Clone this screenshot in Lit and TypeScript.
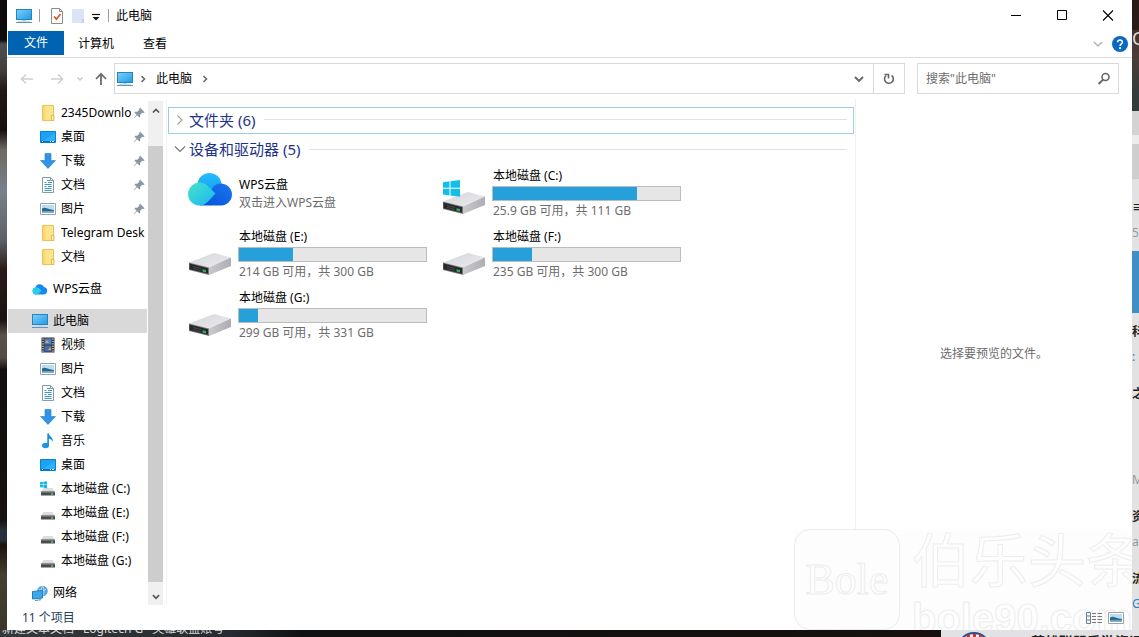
import { LitElement, html, css, svg, nothing, TemplateResult } from "lit";
import { customElement, property } from "lit/decorators.js";

const monitor = svg`
  <defs><linearGradient id="scr" x1="0" y1="0" x2="1" y2="1"><stop offset="0" stop-color="#7fd0fb"/><stop offset="1" stop-color="#1c9be8"/></linearGradient></defs>
  <rect x="0.5" y="1.5" width="15" height="10" fill="url(#scr)" stroke="#2b83b5"/>
  <path d="M6 12h4v1H6z" fill="#b9d3e2"/><path d="M0 14.5h16" stroke="#5b97bd"/><path d="M2 13.5h12" stroke="#c4dbe8"/>`;

const windowsFlag = svg`<path d="M0 1.2 2.9.8v2.6H0zM3.4.7 7 .2v3.2H3.4zM0 3.9h2.9v2.7L0 6.2zM3.4 3.9H7v3.3l-3.6-.5z" fill="#14b4e4"/>`;

const smallDrive = svg`
  <path d="M3.5 7h9L15 11H1z" fill="#dcdcdc"/><path d="M1 10.5h14v4H1z" fill="#4a4d4f"/>
  <path d="M1 10.5h14v1H1z" fill="#8b8e90"/><path d="M11 12.5h2v1h-2z" fill="#8fe39a"/>`;

const ICONS: Record<string, TemplateResult> = {
  pc: monitor,
  folder: svg`<path d="M2.500 .5h11v15h-11z" fill="#ffe48f" stroke="#e8c35a"/><path d="M11.500 10.500h2.500v5h-2.500z" fill="#fff0b5" stroke="#e3b94a"/><path d="M3 1h2.500v14H3z" fill="#ffd768"/>`,
  desktop: svg`<path d="M.5 2.500h15v11H.5z" fill="#1aa3f5" stroke="#0b7fd0"/><path d="M1 13 15 4v9z" fill="#2fb0fa"/><path d="M1 12h14v1.500H1z" fill="#0a72bd"/><path d="M2 12.500h1M10 12.500h1M12 12.500h2" stroke="#cfeaff"/>`,
  download: svg`<path d="M5 .5h6v7h4.500L8 15.500.5 7.500H5z" fill="#3193e3" stroke="#2380cd" stroke-width=".6"/>`,
  doc: svg`<path d="M2.500 .5h8l3 3v12h-11z" fill="#fff" stroke="#8a9aa5"/><path d="M10.500 .5v3h3" fill="none" stroke="#8a9aa5"/><path d="M7 3.500h3M4.500 5.500h2M8 5.500h4M4.500 7.500h7M4.500 9.500h2M8 9.500h4M4.500 11.500h7M4.500 13.500h7" stroke="#3b95bd"/>`,
  picture: svg`<path d="M.5 2.500h15v11H.5z" fill="#fff" stroke="#9aa3aa"/><path d="M2 4h12v8H2z" fill="#b9def2"/><path d="M2 7.500c3-2 6 1 12 1.500v3H2z" fill="#2e6c8d"/><path d="M2 10.500c4-1 8 .5 12-.5v2H2z" fill="#7bb5cf"/>`,
  cloud: svg`<path d="M4 13.500a3.600 3.600 0 0 1-.6-7.100A4.600 4.600 0 0 1 12 6a3.800 3.800 0 0 1 0 7.500z" fill="#1786f0"/><path d="M4 13.500a3.600 3.600 0 0 1-.6-7.100c3-.8 4.500 1.600 6 3.400-1.500 2-3 3.700-5.400 3.700z" fill="#28cfe0"/>`,
  video: svg`<path d="M1.500 .5h13v15h-13z" fill="#33363b"/><path d="M4.500 1.500h7v6h-7z" fill="#4d7fc4"/><path d="M4.500 8.500h7v6h-7z" fill="#3f6cb4"/><path d="M5 6l2-3 2 3zM8 13l2-3 1.500 3z" fill="#e2a34a"/><path d="M3 1.500v14M13 1.500v14" stroke="#e5e5e5" stroke-width="1.200" stroke-dasharray="1.200 1.200"/>`,
  music: svg`<ellipse cx="5.500" cy="12.500" rx="3.500" ry="2.700" fill="#1b95e0"/><path d="M7.300 12.500V.5h1.600c.2 3 4.600 3.600 3.800 8.500-.7-2-2-3-3.800-3.300v7z" fill="#1b8ad6"/>`,
  winDrive: svg`${smallDrive}${windowsFlag}`,
  drive: smallDrive,
  network: svg`<circle cx="10.500" cy="6" r="5.300" fill="#5ba6de"/><path d="M7 4c2 2 5 2 7 0M10.500 1c-2 3-2 7 0 10M10.500 1c2 3 2 7 0 10" fill="none" stroke="#d5ebfa" stroke-width=".7"/><path d="M.5 6.500 10.500 5.500v7.500l-10 1z" fill="#3aa9ea" stroke="#2a7db5"/><path d="M3 15.500l6-.8" stroke="#4d8db5"/>`,
  check: svg`<path d="M2.500 .5h8l3 3v12h-11z" fill="#fff" stroke="#8c8c8c"/><path d="M10.500 .5v3h3" fill="none" stroke="#8c8c8c"/><path d="M5 8.500l2.400 2.700L11.500 6" fill="none" stroke="#e0562e" stroke-width="1.800"/>`,
  blank: svg`<path d="M2 1h12v14H2z" fill="#dbe4f6"/><path d="M12 11h2v4h-2z" fill="#c5d1ea"/>`,
  more: svg`<path d="M4 6.500h8" stroke="#111" stroke-width="1.200"/><path d="M4.500 9h7L8 12.500z" fill="#111"/>`,
  back: svg`<path d="M14 8H3M7 3.500 2.500 8 7 12.500" fill="none" stroke="#cfcfcf" stroke-width="1.500"/>`,
  forward: svg`<path d="M2 8h11M9 3.500 13.500 8 9 12.500" fill="none" stroke="#cfcfcf" stroke-width="1.500"/>`,
  recent: svg`<path d="M5.500 6.500 8 9l2.500-2.500" fill="none" stroke="#c4c4c4" stroke-width="1.300"/>`,
  up: svg`<path d="M8 14V3M3 8l5-5.300L13 8" fill="none" stroke="#6d6d6d" stroke-width="1.800"/>`,
  crumb: svg`<path d="M6.500 5 9.500 8l-3 3" fill="none" stroke="#6a6a6a" stroke-width="1.600"/>`,
  down: svg`<path d="M4 6l4 4 4-4" fill="none" stroke="#666" stroke-width="1.900"/>`,
  collapse: svg`<path d="M4 6l4 4 4-4" fill="none" stroke="#b2b2b2" stroke-width="1.500"/>`,
  refresh: svg`<path d="M5 4.600a4.400 4.400 0 1 0 5.600-.2" fill="none" stroke="#666" stroke-width="1.600"/><path d="M3.500 3.500h4v4" fill="none" stroke="#666" stroke-width="1.600"/>`,
  search: svg`<circle cx="9.500" cy="6" r="3.500" fill="none" stroke="#666" stroke-width="1.600"/><path d="M7 8.800 2.500 13" stroke="#666" stroke-width="1.900"/>`,
  help: svg`<circle cx="8" cy="8" r="8" fill="#0b67c2"/><path d="M5.700 6.300c0-3 4.800-3 4.700 0C10.300 8 8.100 8 8.100 10" fill="none" stroke="#fff" stroke-width="1.600"/><circle cx="8.100" cy="12.200" r="1.100" fill="#fff"/>`,
  min: svg`<path d="M3 7.500h10" stroke="#000"/>`,
  max: svg`<path d="M3.500 2.500h9v9h-9z" fill="none" stroke="#000"/>`,
  close: svg`<path d="M3 2.500l10 10M13 2.500l-10 10" stroke="#000" stroke-width="1.100"/>`,
  pin: svg`<path d="M9.500 1 15.500 7l-1.600.9-1.700-.2-2.600 2.600.1 2.700-1.200 1-3-3L1.500 15 1 14.500 4.800 10.300 1.900 7.400l1-1.100 2.800.1L8.300 3.800 8.200 2.200z" fill="#8997a3"/>`,
  scrollUp: svg`<path d="M4.500 9.700 8 6.200l3.500 3.500" fill="none" stroke="#555" stroke-width="1.900"/>`,
  scrollDown: svg`<path d="M4.500 8.200 8 11.700l3.500-3.500" fill="none" stroke="#555" stroke-width="1.900"/>`,
  folded: svg`<path d="M5.500 3.500 10 8l-4.500 4.500" fill="none" stroke="#a0a0a0" stroke-width="1.100"/>`,
  unfolded: svg`<path d="M3 5.500 8 10.500l5-5" fill="none" stroke="#777" stroke-width="1.200"/>`,
  details: svg`<path d="M.5 2.500h4v11h-4zM.5 6h4M.5 10h4" fill="none" stroke="#6b7f8d"/><path d="M6 3.500h4M11.500 3.500H16M6 6.500h4M11.500 6.500H16M6 9.500h4M11.500 9.500H16M6 12.500h4M11.500 12.500H16" stroke="#777"/>`,
};

@customElement("x-icon")
class XIcon extends LitElement {
  @property() name = "";
  static styles = css`
    :host { display: block; width: 16px; height: 16px; flex: none; }
    .icon { display: block; width: 100%; height: 100%; overflow: visible; }
  `;
  render() {
    return html`<svg class="icon" viewBox="0 0 16 16" aria-hidden="true">${ICONS[this.name]}</svg>`;
  }
}

const bigDrive = svg`
  <defs>
    <linearGradient id="top" x1="0" y1="0" x2="1" y2="1"><stop offset="0" stop-color="#d6d6da"/><stop offset="1" stop-color="#ececf0"/></linearGradient>
    <linearGradient id="side" x1="0" y1="0" x2="1" y2="0"><stop offset="0" stop-color="#c8c8cd"/><stop offset="1" stop-color="#adadb3"/></linearGradient>
  </defs>
  <path d="M1 29.500 26 20l17 4.500-22 10z" fill="url(#top)"/>
  <path d="M21 34.500 43 24.500v8.500L21 42z" fill="url(#side)"/>
  <path d="M1 29.500l20 5V42L1 37z" fill="#77787c"/>
  <path d="M1.500 30.500l18.500 4.700v5.600L1.500 36.200z" fill="#26282b"/>
  <path d="M5 33.500l8 2M5 35.500l8 2" stroke="#4c5054" stroke-width=".8"/>
  <path d="M14.500 36.200l3.500.9v2.300l-3.500-.9z" fill="#2fb350"/>`;

const bigFlag = svg`<path transform="translate(0 6)" d="M1 4.300 7.500 3.300v6.500H1zM8.500 3.200 18 2v7.800H8.500zM1 10.800h6.500v6.600L1 16.400zM8.500 10.800H18v8l-9.500-1.200z" fill="#12bfe8"/>`;

const bigCloud = svg`
  <defs>
    <linearGradient id="c1" x1="0" y1="0" x2="0" y2="1"><stop offset="0" stop-color="#22bdf8"/><stop offset="1" stop-color="#1597f5"/></linearGradient>
    <linearGradient id="c2" x1="0" y1="0" x2="1" y2="1"><stop offset="0" stop-color="#45e3cb"/><stop offset="1" stop-color="#1cb6f2"/></linearGradient>
    <linearGradient id="c3" x1="0" y1="1" x2="1" y2="0"><stop offset="0" stop-color="#0550d8"/><stop offset="1" stop-color="#1b78f0"/></linearGradient>
  </defs>
  <circle cx="21.500" cy="13" r="12" fill="url(#c1)"/>
  <path d="M12 33.500 26 14a11 11 0 1 1 7 19.500z" fill="url(#c3)"/>
  <path d="M11.500 33.500A11.500 11.500 0 1 1 19.600 13.800L27.500 21.500 19.600 30C17 32.500 15 33.500 11.500 33.500z" fill="url(#c2)"/>`;

interface NavItem { icon: string; label: string; pinned?: boolean; root?: boolean; current?: boolean; }

const NAV: NavItem[][] = [
  [
    { icon: "folder", label: "2345Downlo", pinned: true },
    { icon: "desktop", label: "桌面", pinned: true },
    { icon: "download", label: "下载", pinned: true },
    { icon: "doc", label: "文档", pinned: true },
    { icon: "picture", label: "图片", pinned: true },
    { icon: "folder", label: "Telegram Desk" },
    { icon: "folder", label: "文档" },
  ],
  [{ icon: "cloud", label: "WPS云盘", root: true }],
  [
    { icon: "pc", label: "此电脑", root: true, current: true },
    { icon: "video", label: "视频" },
    { icon: "picture", label: "图片" },
    { icon: "doc", label: "文档" },
    { icon: "download", label: "下载" },
    { icon: "music", label: "音乐" },
    { icon: "desktop", label: "桌面" },
    { icon: "winDrive", label: "本地磁盘 (C:)" },
    { icon: "drive", label: "本地磁盘 (E:)" },
    { icon: "drive", label: "本地磁盘 (F:)" },
    { icon: "drive", label: "本地磁盘 (G:)" },
  ],
  [{ icon: "network", label: "网络", root: true }],
];

interface Drive { name: string; note: string; used?: number; kind: "cloud" | "system" | "disk"; }

const DRIVES: Drive[] = [
  { name: "WPS云盘", note: "双击进入WPS云盘", kind: "cloud" },
  { name: "本地磁盘 (C:)", note: "25.9 GB 可用，共 111 GB", used: 77, kind: "system" },
  { name: "本地磁盘 (E:)", note: "214 GB 可用，共 300 GB", used: 29, kind: "disk" },
  { name: "本地磁盘 (F:)", note: "235 GB 可用，共 300 GB", used: 21, kind: "disk" },
  { name: "本地磁盘 (G:)", note: "299 GB 可用，共 331 GB", used: 10, kind: "disk" },
];

@customElement("nav-pane")
class NavPane extends LitElement {
  static styles = css`
    :host { display: flex; min-height: 0; }
    .tree { flex: 1; min-width: 0; display: flex; flex-direction: column; gap: 8px; margin-left: 1px; overflow: hidden; }
    .group { display: flex; flex-direction: column; }
    .item { display: flex; align-items: center; gap: 5px; height: 24px; padding-left: 32px; color: #000; text-decoration: none; white-space: nowrap; }
    .root { padding-left: 24px; }
    .current { background: #d9d9d9; }
    .label { flex: 1; min-width: 0; overflow: hidden; }
    .pin { width: 12px; height: 12px; margin: 0 2px 0 -3px; }
    .bar { width: 15px; margin: 0 1px; display: flex; flex-direction: column; background: #f0f0f0; }
    .step { display: flex; justify-content: center; padding: 0; border: 0; background: none; height: 20px; align-items: center; }
    .track { flex: 1; display: flex; flex-direction: column; padding: 25px 0 3px; }
    .thumb { flex: 1; background: #cdcdcd; }
    .step x-icon { width: 14px; height: 14px; }
  `;
  render() {
    return html`
      <nav class="tree" aria-label="导航窗格">
        ${NAV.map((g) => html`<div class="group">${g.map((i) => html`
          <a href="#" class="item ${i.root ? "root" : ""} ${i.current ? "current" : ""}">
            <x-icon name=${i.icon}></x-icon><span class="label">${i.label}</span>
            ${i.pinned ? html`<x-icon class="pin" name="pin"></x-icon>` : nothing}
          </a>`)}</div>`)}
      </nav>
      <div class="bar">
        <button class="step" aria-label="向上滚动"><x-icon name="scrollUp"></x-icon></button>
        <div class="track"><div class="thumb"></div></div>
        <button class="step" aria-label="向下滚动"><x-icon name="scrollDown"></x-icon></button>
      </div>`;
  }
}

@customElement("drive-tile")
class DriveTile extends LitElement {
  @property({ attribute: false }) drive!: Drive;
  static styles = css`
    :host { display: flex; gap: 6px; align-items: center; height: 61px; }
    .art { width: 44px; height: 44px; flex: none; }
    .text { flex: 1; min-width: 0; display: flex; flex-direction: column; gap: 2px; white-space: nowrap; }
    .name, .note { line-height: 16px; padding-left: 1px; }
    .note { color: #6d6d6d; }
    .meter { height: 15px; box-sizing: border-box; border: 1px solid #bcbcbc; background: #e6e6e6; }
    .fill { height: 100%; background: #26a0da; }
  `;
  render() {
    const d = this.drive;
    return html`
      <svg class="art" viewBox="0 0 44 44" aria-hidden="true">
        ${d.kind === "cloud" ? bigCloud : bigDrive}${d.kind === "system" ? bigFlag : nothing}
      </svg>
      <div class="text">
        <div class="name">${d.name}</div>
        ${d.used === undefined ? nothing : html`
          <div class="meter" role="meter" aria-label=${d.name} aria-valuenow=${d.used}>
            <div class="fill" style="width:${d.used}%"></div>
          </div>`}
        <div class="note">${d.note}</div>
      </div>`;
  }
}

@customElement("app-root")
class AppRoot extends LitElement {
  static styles = css`
    :host {
      display: grid; grid-template-columns: 7px minmax(0, 1fr) 7px; grid-template-rows: minmax(0, 1fr) 7px;
      height: 100vh; overflow: hidden;
      font: 12px/16px "Noto Sans", "Noto Sans CJK SC", sans-serif; color: #000;
    }
    button, input { font: inherit; color: inherit; }
    button { padding: 0; border: 0; background: none; display: flex; align-items: center; justify-content: center; }

    .desk-left { background: linear-gradient(#0d0a09 0 40px, #4d4e50 44px, #42403e 70px, #211a17 90px, #15100f 130px, #6e6962 150px, #77828c 190px, #5d6166 240px, #2a1a16 270px, #1c1312 320px, #5c5048 335px, #554b45 358px, #120e0e 370px, #17120f 520px, #25303c 530px, #25303c 540px, #1d120e 545px, #443f30 575px, #3b372a); }
    .desk-right { display: flex; flex-direction: column; overflow: hidden; background: #e3e2e2; white-space: nowrap; }
    .seg { flex: none; overflow: hidden; }
    .s1 { height: 30px; background: #2a1b18; }
    .s2 { height: 81px; background: linear-gradient(#463029, #4c3d38 30px, #353b3b 60px); color: #ddd; font-size: 18px; }
    .s3 { height: 24px; background: #d4d3d3; }
    .s4 { height: 9px; background: #ececec; }
    .s5 { height: 35px; background: #cfcece; }
    .s6 { height: 72px; padding-top: 16px; box-sizing: border-box; line-height: 25px; color: #999; }
    .s7 { height: 62px; background: #3d8fc6; }
    .s8 { height: 142px; padding-top: 6px; box-sizing: border-box; }
    .s9 { flex: 1; padding-top: 12px; }
    .frag { line-height: 25px; }
    .strong { font-weight: 700; color: #222; }
    .soft { color: #999; }
    .link { color: #2b7fc0; }
    .gap { padding-top: 12px; }
    .desk-bottom { grid-column: 1 / -1; display: flex; overflow: hidden; background: #17130f; color: #d8d8d8; }
    .labels { flex: 1; display: flex; align-items: flex-end; gap: 9px; padding-left: 2px; white-space: nowrap; background: linear-gradient(90deg, #35393a, #262b31 230px, #101112 300px, #17100e); }
    .page { flex: 0 0 198px; display: flex; gap: 40px; padding: 2px 0 0 16px; background: #e2e1e3; box-sizing: border-box; overflow: hidden; color: #222; font-weight: 700; font-size: 14px; line-height: 20px; white-space: nowrap; }
    .badge { flex: none; width: 34px; height: 34px; }

    .window { position: relative; display: flex; flex-direction: column; background: #fff; min-height: 0; overflow: hidden; }
    .title { display: flex; align-items: center; height: 31px; padding: 0 1px 0 9px; }
    .quick { display: flex; align-items: center; flex: 1; gap: 7px; }
    .rule { width: 1px; height: 13px; background: #9c9c9c; }
    .tools-quick { display: flex; align-items: center; gap: 5px; margin-left: 2px; }
    .tools-quick .narrow { width: 10px; }
    .caption { display: flex; }
    .caption button { width: 46px; height: 31px; }
    .tabs { display: flex; height: 26px; border-bottom: 1px solid #dadbdc; padding: 0 4px 0 1px; align-items: flex-start; }
    .tab { height: 25px; padding: 0 14px; }
    .tab + .tab { padding: 0 15px 0 14px; }
    .file { height: 24px; padding: 0 16px; background: #0063b1; color: #fff; }
    .tools { margin-left: auto; height: 26px; display: flex; align-items: center; gap: 6px; }
    .address { display: flex; align-items: center; gap: 12px; padding: 5px 13px 5px 12px; }
    .moves { display: flex; align-items: center; gap: 14px; margin-right: -7px; }
    .tight { display: flex; align-items: center; gap: 5px; margin-left: -7px; }
    .path { flex: 1; display: flex; align-items: center; gap: 2px; height: 31px; box-sizing: border-box; border: 1px solid #d9d9d9; padding-left: 2px; }
    .crumb { padding: 0 3px; }
    .path .end { margin-left: auto; width: 29px; height: 29px; margin-right: -2px; }
    .path .reload { width: 31px; height: 29px; border-left: 1px solid #d9d9d9; }
    .search { width: 202px; height: 31px; box-sizing: border-box; border: 1px solid #d9d9d9; display: flex; align-items: center; padding: 0 6px 0 8px; }
    .search input { flex: 1; min-width: 0; border: 0; padding: 0; outline: 0; background: none; }
    .search input::placeholder { color: #6d6d6d; opacity: 1; }
    .body { flex: 1; min-height: 0; display: grid; grid-template-columns: 157px minmax(0, 1fr) 277px; }
    nav-pane { margin-top: 2px; }
    .files { border-left: 1px solid #f3f3f3; margin-left: 2px; padding: 8px 1px 0 1px; }
    .head { width: 100%; height: 27px; box-sizing: border-box; border: 1px solid transparent; padding: 0 6px 2px 3px; gap: 1px; font-size: 15px; color: #1e3287; }
    .head + .head { margin-top: 3px; height: 26px; }
    .focus { border-color: #99d1e3; }
    .head i { flex: 1; height: 1px; background: #e2e2e2; margin-left: 8px; }
    .grid { display: grid; grid-template-columns: repeat(auto-fill, 239px); column-gap: 15px; padding-left: 20px; }
    .preview { border-left: 1px solid #f0f0f0; display: flex; align-items: center; justify-content: center; color: #6d6d6d; padding-top: 4px; }
    .status { height: 25px; display: flex; align-items: center; padding: 0 8px 0 15px; color: #23415c; }
    .views { margin-left: auto; display: flex; gap: 6px; position: relative; z-index: 1; }

    .mark { position: absolute; right: 0; bottom: 0; width: 338px; height: 101px; display: flex; gap: 12px; overflow: hidden; background: #fdfdfd; pointer-events: none; color: #fefefe; -webkit-text-stroke: 1px #ededed; white-space: nowrap; }
    .logo { flex: none; width: 106px; height: 101px; box-sizing: border-box; border: 1px solid #ececec; border-radius: 16px; display: flex; align-items: center; justify-content: center; font: 44px/44px "Liberation Serif", serif; }
    .brand { display: flex; flex-direction: column; gap: 12px; }
    .cn { font: 58px/56px "Noto Sans CJK SC", sans-serif; }
    .url { font: 700 40px/42px "Liberation Sans", sans-serif; }
  `;

  render() {
    return html`
      <div class="desk-left"></div>
      <main class="window">
        <header class="title">
          <div class="quick">
            <x-icon name="pc"></x-icon><span class="rule"></span>
            <div class="tools-quick">
              <button aria-label="属性"><x-icon name="check"></x-icon></button>
              <button aria-label="新建文件夹"><x-icon name="blank"></x-icon></button>
              <button class="narrow" aria-label="自定义快速访问工具栏"><x-icon name="more"></x-icon></button>
            </div>
            <span class="rule"></span><span>此电脑</span>
          </div>
          <div class="caption">
            <button aria-label="最小化"><x-icon name="min"></x-icon></button>
            <button aria-label="最大化"><x-icon name="max"></x-icon></button>
            <button aria-label="关闭"><x-icon name="close"></x-icon></button>
          </div>
        </header>
        <div class="tabs">
          <button class="tab file">文件</button><button class="tab">计算机</button><button class="tab">查看</button>
          <div class="tools">
            <button aria-label="展开功能区"><x-icon name="collapse"></x-icon></button>
            <button aria-label="帮助"><x-icon name="help"></x-icon></button>
          </div>
        </div>
        <div class="address">
          <div class="moves">
            <button aria-label="后退"><x-icon name="back"></x-icon></button>
            <button aria-label="前进"><x-icon name="forward"></x-icon></button>
            <div class="tight">
              <button aria-label="最近位置"><x-icon name="recent"></x-icon></button>
              <button aria-label="上移"><x-icon name="up"></x-icon></button>
            </div>
          </div>
          <div class="path">
            <x-icon name="pc"></x-icon><x-icon name="crumb"></x-icon>
            <button class="crumb">此电脑</button><x-icon name="crumb"></x-icon>
            <button class="end" aria-label="以前的位置"><x-icon name="down"></x-icon></button>
            <button class="reload" aria-label="刷新"><x-icon name="refresh"></x-icon></button>
          </div>
          <label class="search">
            <input type="text" aria-label="搜索" placeholder='搜索"此电脑"'>
            <x-icon name="search"></x-icon>
          </label>
        </div>
        <div class="body">
          <nav-pane></nav-pane>
          <section class="files">
            <button class="head focus"><x-icon name="folded"></x-icon>文件夹 (6)<i></i></button>
            <button class="head"><x-icon name="unfolded"></x-icon>设备和驱动器 (5)<i></i></button>
            <div class="grid">${DRIVES.map((d) => html`<drive-tile .drive=${d}></drive-tile>`)}</div>
          </section>
          <aside class="preview">选择要预览的文件。</aside>
        </div>
        <div class="mark">
          <div class="logo">Bole</div>
          <div class="brand"><span class="cn">伯乐头条</span><span class="url">bole90.com</span></div>
        </div>
        <footer class="status">
          <span>11 个项目</span>
          <div class="views">
            <button aria-label="详细信息"><x-icon name="details"></x-icon></button>
            <button aria-label="大图标"><x-icon name="picture"></x-icon></button>
          </div>
        </footer>
      </main>
      <div class="desk-right">
        <div class="seg s1"></div><div class="seg s2">C</div><div class="seg s3"></div><div class="seg s4"></div><div class="seg s5"></div>
        <div class="seg s6"><div class="strong">≡</div>5</div>
        <div class="seg s7"></div>
        <div class="seg s8"><div class="frag strong">科</div><div class="frag link">:</div><div class="frag strong gap">之</div></div>
        <div class="seg s9"><div class="frag soft">ME</div><div class="frag strong gap">资</div><div class="frag soft">a</div><div class="frag strong gap">流</div><div class="frag link">G</div></div>
      </div>
      <div class="desk-bottom">
        <div class="labels"><span>新建文本文档</span><span>Logitech G</span><span>英雄联盟账号</span></div>
        <div class="page">
          <svg class="badge" viewBox="0 0 34 34" aria-hidden="true"><circle cx="17" cy="17" r="16" fill="#e9eef5" stroke="#2b4f8a" stroke-width="2"/><path d="M10 3h3v6h-3zM16 2h3v6h-3zM22 3h3v6h-3z" fill="#c8352e"/></svg>
          <span>英雄联盟手游资讯</span>
        </div>
      </div>`;
  }
}
